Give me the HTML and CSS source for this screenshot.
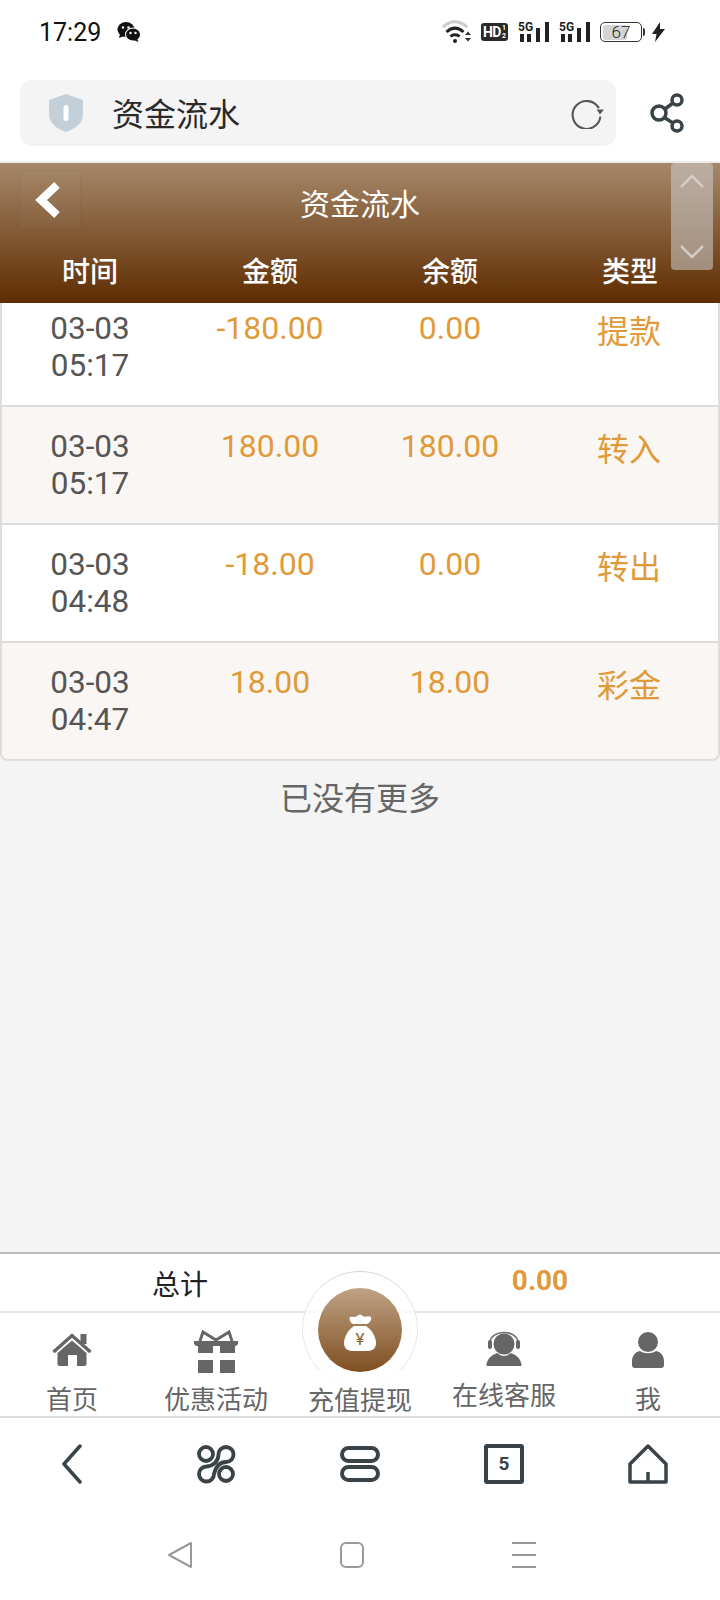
FILE: index.html
```html
<!DOCTYPE html>
<html lang="zh-CN">
<head>
    <meta charset="UTF-8">
    <meta name="viewport" content="width=device-width, initial-scale=1.0">
    <title>资金流水</title>
    <link rel="stylesheet" href="styles.css">
</head>
<body>
    <!-- Barra de status -->
    <div class="status-bar">
        <div class="status-left">
            <span class="hora">17:29</span>
            <svg class="ico-wechat" width="24" height="22" viewBox="0 0 24 22">
                <ellipse cx="9" cy="8.5" rx="8.5" ry="7.5" fill="#111"/>
                <path d="M3 13l-1 4 5-2z" fill="#111"/>
                <circle cx="6" cy="6.5" r="1.3" fill="#fff"/>
                <circle cx="11.5" cy="6.5" r="1.3" fill="#fff"/>
                <ellipse cx="16" cy="13.5" rx="8" ry="7" fill="#fff"/>
                <ellipse cx="16" cy="13.5" rx="7" ry="6" fill="#111"/>
                <path d="M20 17.5l1.5 3.5-5-2z" fill="#111"/>
                <circle cx="13.5" cy="12" r="1.2" fill="#fff"/>
                <circle cx="18.5" cy="12" r="1.2" fill="#fff"/>
            </svg>
        </div>
        <div class="status-right">
            <svg width="29" height="24" viewBox="0 0 29 24">
                <path d="M1 7C8 0 18 0 25 7" fill="none" stroke="#ccc" stroke-width="3"/>
                <path d="M4.500 12C10 7 16 7 21.500 12" fill="none" stroke="#222" stroke-width="3"/>
                <path d="M8.500 16.500C11 14 15 14 17.500 16.500" fill="none" stroke="#222" stroke-width="3"/>
                <circle cx="13" cy="21" r="2" fill="#222"/>
                <path d="M23 15l3-3.500 3 3.500zM23 18l3 3.500 3-3.500z" fill="#333"/>
            </svg>
            <span class="badge-hd">HD<span class="badge-frac">1<br>2</span></span>
            <svg width="31" height="24" viewBox="0 0 31 24">
                <text x="0" y="11" class="txt-5g">5G</text>
                <rect x="2" y="14" width="4" height="8" fill="#222"/>
                <rect x="9" y="14" width="4" height="8" fill="#222"/>
                <rect x="18" y="8" width="4" height="14" fill="#222"/>
                <rect x="27" y="2" width="4" height="20" fill="#222"/>
            </svg>
            <svg width="31" height="24" viewBox="0 0 31 24">
                <text x="0" y="11" class="txt-5g">5G</text>
                <rect x="2" y="14" width="4" height="8" fill="#222"/>
                <rect x="9" y="14" width="4" height="8" fill="#222"/>
                <rect x="18" y="8" width="4" height="14" fill="#222"/>
                <rect x="27" y="2" width="4" height="20" fill="#222"/>
            </svg>
            <div class="bateria">
                <div class="bateria-corpo"><span class="bateria-nivel">67</span></div>
                <div class="bateria-ponta"></div>
            </div>
            <svg width="13" height="20" viewBox="0 0 13 20">
                <path d="M8 0L0 12h4.500L3 20l10-13H8z" fill="#222"/>
            </svg>
        </div>
    </div>

    <!-- Barra de endereco -->
    <div class="address-row">
        <div class="address-bar">
            <svg width="38" height="38" viewBox="0 0 38 38">
                <path d="M19 0l17 6v15c0 8-8 14-17 17C10 35 2 29 2 21V6z" fill="#c3d0da"/>
                <rect x="16.500" y="11" width="5" height="16" rx="2.500" fill="#fff"/>
            </svg>
            <span class="address-title">资金流水</span>
            <svg class="ico-reload" width="33" height="31" viewBox="0 0 32 30">
                <path d="M27 10A13.500 13.500 0 1 0 28.500 18" fill="none" stroke="#555" stroke-width="2"/>
                <path d="M25 11h7l-4 5z" fill="#555"/>
            </svg>
        </div>
        <svg class="ico-share" width="36" height="40" viewBox="0 0 36 40">
            <g fill="none" stroke="#3a4348" stroke-width="3.500">
                <circle cx="9" cy="20" r="7"/>
                <circle cx="27" cy="7" r="5"/>
                <circle cx="27" cy="33" r="5"/>
                <path d="M15 16l8-6M15 25l8 5"/>
            </g>
        </svg>
    </div>

    <!-- Cabecalho -->
    <header class="header">
        <div class="header-topo">
            <div class="btn-voltar">
                <svg width="28" height="38" viewBox="0 0 28 38">
                    <path d="M23 4L7 19l16 15" fill="none" stroke="#fff" stroke-width="8"/>
                </svg>
            </div>
            <h1 class="titulo">资金流水</h1>
        </div>
        <div class="colunas">
            <span>时间</span>
            <span>金额</span>
            <span>余额</span>
            <span>类型</span>
        </div>
        <div class="rolagem">
            <svg width="26" height="16" viewBox="0 0 26 16"><path d="M2 14L13 3l11 11" fill="none" stroke="#d3cdc6" stroke-width="2.500"/></svg>
            <svg width="26" height="16" viewBox="0 0 26 16"><path d="M2 2l11 11L24 2" fill="none" stroke="#d3cdc6" stroke-width="2.500"/></svg>
        </div>
    </header>

    <!-- Lista de movimentos -->
    <div class="lista">
        <div class="linha linha-primeira">
            <div class="data">03-03<br>05:17</div>
            <div class="valor">-180.00</div>
            <div class="valor">0.00</div>
            <div class="tipo">提款</div>
        </div>
        <div class="linha linha-par">
            <div class="data">03-03<br>05:17</div>
            <div class="valor">180.00</div>
            <div class="valor">180.00</div>
            <div class="tipo">转入</div>
        </div>
        <div class="linha">
            <div class="data">03-03<br>04:48</div>
            <div class="valor">-18.00</div>
            <div class="valor">0.00</div>
            <div class="tipo">转出</div>
        </div>
        <div class="linha linha-par">
            <div class="data">03-03<br>04:47</div>
            <div class="valor">18.00</div>
            <div class="valor">18.00</div>
            <div class="tipo">彩金</div>
        </div>
    </div>
    <div class="sem-mais">已没有更多</div>

    <!-- Total -->
    <div class="total">
        <span class="total-label">总计</span>
        <span class="total-valor">0.00</span>
    </div>

    <!-- Abas -->
    <nav class="abas">
        <div class="aba">
            <svg width="46" height="46" viewBox="0 0 46 46">
                <rect x="31.500" y="5" width="6" height="10" fill="#666"/>
                <path d="M4.500 23L23 6.500 41.500 23" fill="none" stroke="#666" stroke-width="3.500"/>
                <path d="M23 11.500L37.500 24v11a2 2 0 0 1-2 2H28V26h-9v11h-8.500a2 2 0 0 1-2-2V24z" fill="#666"/>
            </svg>
            <span class="aba-nome">首页</span>
        </div>
        <div class="aba">
            <svg width="46" height="46" viewBox="0 0 46 46">
                <path d="M1 12h44v3l-2 2H3l-2-2z" fill="#666"/>
                <rect x="5" y="16" width="15" height="8" fill="#666"/>
                <rect x="27" y="16" width="15" height="8" fill="#666"/>
                <rect x="5" y="31" width="15" height="13" fill="#666"/>
                <rect x="27" y="31" width="15" height="13" fill="#666"/>
                <path d="M7 12L10 3l13 8 13-8 3 9" fill="none" stroke="#666" stroke-width="3"/>
            </svg>
            <span class="aba-nome">优惠活动</span>
        </div>
        <div class="aba">
            <div class="fab">
                <div class="fab-circulo">
                    <svg width="34" height="38" viewBox="0 0 34 38">
                        <path d="M7 3c3-1 5 1 7-1 2-2 4-2 6 0 2 2 5-1 8 1 1 2-1 6-4 7H10C7 9 6 5 7 3z" fill="#fff"/>
                        <path d="M11 12h12c6 4 10 11 10 17 0 6-4 8-9 8H10c-5 0-9-2-9-8 0-6 4-13 10-17z" fill="#fff"/>
                        <text x="17" y="31" class="txt-yuan">¥</text>
                    </svg>
                </div>
            </div>
            <div class="aba-vazia"></div>
            <span class="aba-nome">充值提现</span>
        </div>
        <div class="aba">
            <svg width="46" height="46" viewBox="0 0 46 46">
                <circle cx="23" cy="15" r="10.500" fill="#666"/>
                <path d="M9 14C9 0 37 0 37 14" fill="none" stroke="#666" stroke-width="1.500"/>
                <rect x="7" y="11" width="4" height="9" rx="2" fill="#666"/>
                <rect x="35" y="11" width="4" height="9" rx="2" fill="#666"/>
                <path d="M5.500 37c0-6 4-11 11-13 2 2 4 3 6.500 3s4.500-1 6.500-3c7 2 11 7 11 13z" fill="#666"/>
            </svg>
            <span class="aba-nome aba-nome-alta">在线客服</span>
        </div>
        <div class="aba">
            <svg width="46" height="46" viewBox="0 0 46 46">
                <circle cx="23" cy="13" r="10" fill="#666"/>
                <path d="M15 22c4 3 12 3 16 0 5 1 8 5 8 10v4a3 3 0 0 1-3 3H10a3 3 0 0 1-3-3v-4c0-5 3-9 8-10z" fill="#666"/>
            </svg>
            <span class="aba-nome">我</span>
        </div>
    </nav>

    <!-- Barra do navegador -->
    <div class="toolbar">
        <svg width="40" height="40" viewBox="0 0 40 40">
            <path d="M28 2L12 20l16 18" fill="none" stroke="#3a4348" stroke-width="3.500" stroke-linecap="round" stroke-linejoin="round"/>
        </svg>
        <svg width="40" height="40" viewBox="0 0 40 40">
            <g fill="none" stroke="#3a4348" stroke-width="3.800">
                <circle cx="10" cy="10" r="7"/>
                <circle cx="30" cy="30" r="7"/>
                <path d="M22.500 10.500A7.500 7.500 0 1 1 30 18C24 18 20 22 18 30A7.500 7.500 0 1 1 10.500 22.500C17 22.500 22.500 17 22.500 10.500z"/>
            </g>
        </svg>
        <svg width="40" height="40" viewBox="0 0 40 40">
            <rect x="2" y="4" width="36" height="13" rx="6.500" fill="none" stroke="#3a4348" stroke-width="4"/>
            <rect x="2" y="23" width="36" height="13" rx="6.500" fill="none" stroke="#3a4348" stroke-width="4"/>
        </svg>
        <div class="toolbar-abas">5</div>
        <svg width="40" height="40" viewBox="0 0 40 40">
            <path d="M20 2L2 20v18h36V20zM20 28v10" fill="none" stroke="#3a4348" stroke-width="3.500" stroke-linejoin="round"/>
        </svg>
    </div>

    <!-- Navegacao do sistema -->
    <div class="sys-nav">
        <svg width="26" height="28" viewBox="0 0 26 28">
            <path d="M24 2v24L2 14z" fill="none" stroke="#999" stroke-width="2" stroke-linejoin="round"/>
        </svg>
        <svg width="26" height="28" viewBox="0 0 26 28">
            <rect x="2" y="2" width="22" height="24" rx="5" fill="none" stroke="#999" stroke-width="2"/>
        </svg>
        <svg width="26" height="28" viewBox="0 0 26 28">
            <path d="M1 2h24M1 14h24M1 26h24" fill="none" stroke="#999" stroke-width="2"/>
        </svg>
    </div>
</body>
</html>
```

FILE: styles.css
```css
* {
    margin: 0;
    padding: 0;
    box-sizing: border-box;
    font-family: Roboto, 'Noto Sans CJK SC', sans-serif;
}

body {
    width: 720px;
    height: 1600px;
    background-color: #f4f4f4;
    display: flex;
    flex-direction: column;
    overflow: hidden;
}

svg {
    display: block;
}

.status-bar {
    height: 80px;
    background: white;
    padding: 20px 55px 0 39px;
    display: flex;
    justify-content: space-between;
    align-items: flex-start;
}

.status-left {
    display: flex;
    align-items: center;
    gap: 16px;
    height: 24px;
}

.hora {
    font-size: 25px;
    color: #111;
}

.status-right {
    display: flex;
    align-items: center;
    gap: 10px;
    height: 24px;
}

.badge-hd {
    display: flex;
    align-items: center;
    justify-content: center;
    gap: 1px;
    width: 27px;
    height: 18px;
    background: #2a2a2a;
    border-radius: 3px;
    color: white;
    font-size: 14px;
    font-weight: 700;
    letter-spacing: -0.5px;
    line-height: 1;
}

.badge-frac {
    font-size: 7px;
    line-height: 8px;
    letter-spacing: 0;
    text-align: center;
}

.txt-5g {
    font-size: 12px;
    font-weight: 700;
    fill: #222;
}

.bateria {
    display: flex;
    align-items: center;
    gap: 1px;
    margin-right: -3px;
}

.bateria-corpo {
    width: 42px;
    height: 20px;
    border: 1.5px solid #333;
    border-radius: 5px;
    padding: 1.5px;
    overflow: hidden;
}

.bateria-nivel {
    display: block;
    width: 67%;
    height: 100%;
    background: #d4d4d4;
    border-radius: 2px;
    font-size: 17px;
    font-weight: 300;
    line-height: 14px;
    padding-left: 9px;
    color: #222;
    white-space: nowrap;
}

.bateria-ponta {
    width: 2px;
    height: 8px;
    background: #333;
    border-radius: 0 2px 2px 0;
}

.address-row {
    height: 83px;
    background: white;
    padding: 0 34px 15px 20px;
    border-bottom: 2px solid #ececec;
    display: flex;
    align-items: center;
    justify-content: space-between;
}

.address-bar {
    width: 596px;
    height: 66px;
    background: #f4f4f4;
    border-radius: 12px;
    padding: 0 12px 0 27px;
    display: flex;
    align-items: center;
}

.address-title {
    flex: 1;
    margin-left: 27px;
    padding-top: 3px;
    font-size: 32px;
    line-height: 60px;
    color: #2a2a2a;
}

.header {
    position: relative;
    height: 140px;
    background: linear-gradient(#a5886a, #5f2c00);
}

.header-topo {
    height: 78px;
    display: flex;
    align-items: center;
    justify-content: center;
}

.titulo {
    font-size: 30px;
    font-weight: 400;
    color: white;
}

.btn-voltar {
    position: absolute;
    left: 20px;
    top: 8px;
    width: 60px;
    height: 58px;
    padding-right: 4px;
    background: rgba(255,255,255,0.02);
    box-shadow: 0 0 3px rgba(0,0,0,0.06);
    display: flex;
    align-items: center;
    justify-content: center;
}

.colunas {
    display: grid;
    grid-template-columns: repeat(4, 1fr);
    text-align: center;
    color: white;
    font-size: 28px;
    font-weight: 500;
    line-height: 54px;
    margin-top: 5px;
}

.rolagem {
    position: absolute;
    top: 0;
    right: 7px;
    width: 42px;
    height: 107px;
    background: rgba(205,205,205,0.55);
    border-radius: 4px;
    padding: 10px 0;
    display: flex;
    flex-direction: column;
    align-items: center;
    justify-content: space-between;
}

.lista {
    border: solid #ddd;
    border-width: 0 2px 2px;
    border-radius: 0 0 8px 8px;
    overflow: hidden;
}

.linha {
    display: grid;
    grid-template-columns: repeat(4, 1fr);
    height: 118px;
    padding-top: 21px;
    margin: 0 -2px;
    background: white;
    border-top: 2px solid #ddd;
    text-align: center;
    font-size: 32px;
    line-height: 37px;
}

.linha-primeira {
    height: 102px;
    padding-top: 7px;
    border-top: 0;
}

.linha-par {
    background: #f9f6f3;
}

.data {
    color: #555;
    font-size: 31.500px;
}

.valor {
    color: #e09a3a;
}

.tipo {
    color: #e09a3a;
    padding: 4px 2px 0 0;
}

.sem-mais {
    flex: 1;
    padding-top: 15px;
    text-align: center;
    color: #666;
    font-size: 32px;
    line-height: 46px;
}

.total {
    height: 61px;
    background: white;
    border-top: 2px solid #bbb;
    border-bottom: 2px solid #e5e5e5;
    display: grid;
    grid-template-columns: 1fr 1fr;
    align-items: center;
    text-align: center;
}

.total-label {
    font-size: 28px;
    color: #222;
}

.total-valor {
    font-size: 28px;
    font-weight: 700;
    color: #e09a3a;
    padding-bottom: 4px;
}

.abas {
    height: 105px;
    background: white;
    border-bottom: 2px solid #ddd;
    display: grid;
    grid-template-columns: repeat(5, 1fr);
}

.aba {
    position: relative;
    display: flex;
    flex-direction: column;
    align-items: center;
    padding-top: 16px;
}

.aba-vazia {
    height: 47px;
}

.aba-nome {
    position: relative;
    margin-top: 9px;
    color: #666;
    font-size: 26px;
    line-height: 32px;
}

.aba-nome-alta {
    margin-top: 5px;
}

.fab {
    position: absolute;
    top: -42px;
    left: 14px;
    width: 116px;
    height: 116px;
    background: rgba(255,255,255,0.8);
    border: 1px solid;
    border-color: #d8d8d8 #e8e8e8 #fafafa;
    border-radius: 50%;
    display: flex;
    align-items: center;
    justify-content: center;
}

.fab-circulo {
    width: 84px;
    height: 84px;
    margin-top: 2px;
    border-radius: 50%;
    background: linear-gradient(#bfa284, #7f4f22);
    display: flex;
    align-items: center;
    justify-content: center;
    padding-top: 6px;
}

.txt-yuan {
    font-size: 17px;
    font-weight: 400;
    fill: #8a6238;
    text-anchor: middle;
}

.toolbar {
    height: 88px;
    padding-top: 3px;
    background: white;
    display: grid;
    grid-template-columns: repeat(5, 1fr);
    justify-items: center;
    align-items: center;
}

.toolbar-abas {
    width: 40px;
    height: 40px;
    border: 4px solid #3a4348;
    border-radius: 3px;
    display: flex;
    align-items: center;
    justify-content: center;
    color: #3a4348;
    font-size: 19px;
    font-weight: 700;
}

.sys-nav {
    height: 94px;
    padding: 4px 183px 0 167px;
    background: white;
    display: flex;
    align-items: center;
    justify-content: space-between;
}
```
